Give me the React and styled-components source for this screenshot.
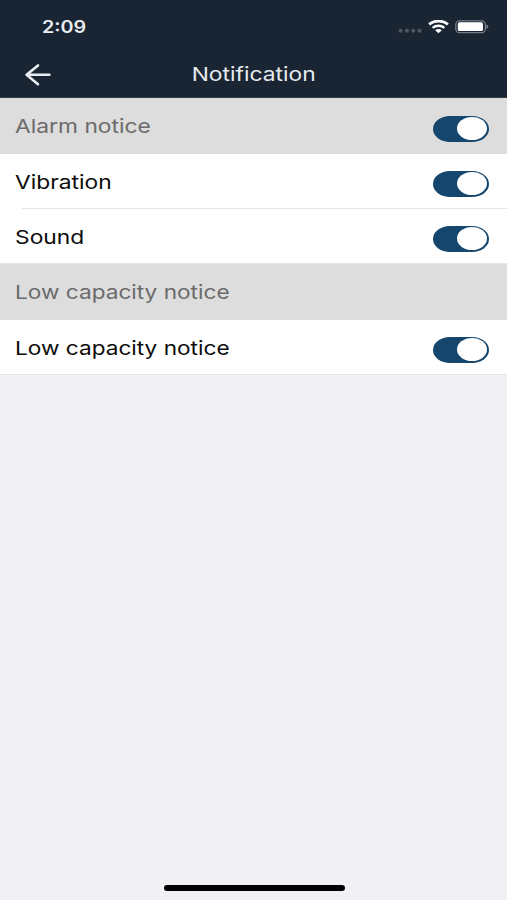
import React, { useState } from "react";
import styled, { createGlobalStyle } from "styled-components";

const GlobalStyle = createGlobalStyle`
  * {
    box-sizing: border-box;
  }
  body {
    margin: 0;
    background: #f0f0f5;
    font-family: Inter, "Liberation Sans", sans-serif;
  }
`;

const Screen = styled.div`
  display: flex;
  flex-direction: column;
  height: 900px;
  background: #f0f0f5;
`;

const Header = styled.header`
  height: 98px;
  background: #1a2533;
  border-bottom: 1px solid #343c4a;
`;

const StatusBar = styled.div`
  display: flex;
  align-items: center;
  justify-content: space-between;
  height: 53px;
  padding: 0 18.5px 0 42px;
`;

// wide lettering, stretched from one edge so the text stays on its margin
const Wide = styled.span`
  display: inline-block;
  white-space: nowrap;
  transform: scaleX(${(props) => props.$scale || 1.19});
  transform-origin: ${(props) => props.$origin || "left"} center;
`;

const Time = styled.div`
  padding-top: 2px;
  font-size: 17px;
  line-height: 51px;
  font-weight: 600;
  color: #e9edf1;
`;

const StatusIcons = styled.div`
  display: flex;
  align-items: center;
`;

const NavBar = styled.div`
  display: grid;
  grid-template-columns: 60px 1fr 60px;
  align-items: center;
  height: 44px;
`;

const BackButton = styled.button`
  display: flex;
  padding: 0 0 1px 24px;
  border: 0;
  background: none;
  cursor: pointer;
`;

const Title = styled.h1`
  margin: 0;
  text-align: center;
  font-size: 19px;
  line-height: 44px;
  font-weight: 400;
  color: #e6eaee;
`;

const Row = styled.div`
  display: flex;
  align-items: center;
  justify-content: space-between;
  height: ${(props) => props.$height}px;
  padding: 0 18.5px 0 15px;
  background: ${(props) => (props.$heading ? "#dddddd" : "#ffffff")};
  color: ${(props) => (props.$heading ? "#6b6b6b" : "#0c0c0c")};
`;

const Label = styled.div`
  padding-top: ${(props) => (props.$heading ? 2 : 3)}px;
  font-size: 19px;
  line-height: 24px;
`;

const Divider = styled.div`
  height: 1px;
  margin-left: ${(props) => (props.$inset ? 22 : 0)}px;
  background: #e6e6e8;
`;

const List = styled.main`
  flex: 1;
`;

const Group = styled.section`
  background: #ffffff;
`;

const Track = styled.button`
  display: flex;
  align-items: center;
  justify-content: ${(props) => (props.$on ? "flex-end" : "flex-start")};
  width: 55.5px;
  height: 26px;
  margin-top: 5px;
  padding: 0 2px;
  border: 0;
  border-radius: 17px / 13px;
  background: ${(props) => (props.$on ? "#15466d" : "#c8c8cc")};
  cursor: pointer;
`;

const Knob = styled.span`
  width: 30px;
  height: 23px;
  border-radius: 50%;
  background: #ffffff;
`;

const Footer = styled.footer`
  display: flex;
  justify-content: center;
  height: 15px;
  padding-left: 1px;
`;

const HomeIndicator = styled.div`
  width: 181px;
  height: 6px;
  border-radius: 3px;
  background: #000000;
`;

const Dots = () => (
  <svg width='24' height='20' viewBox='0 0 24 20' fill='#4d5661'>
    <circle cx='2.6' cy='13.8' r='2' />
    <circle cx='9' cy='13.8' r='2' />
    <circle cx='15.2' cy='13.8' r='2' />
    <circle cx='21.5' cy='13.8' r='2' />
  </svg>
);

const WifiIcon = styled.svg`
  margin: 0 6px;
`;

const Wifi = () => (
  <WifiIcon width='21' height='14' viewBox='0 0 21 14' fill='none' stroke='#f8fafc'>
    <path d='M1.1 4.4C6.2 0 14.8 0 19.9 4.4' strokeWidth='2.8' />
    <path d='M4.6 7.8C7.9 5 13.1 5 16.4 7.8' strokeWidth='2.4' />
    <path
      d='M7.2 10.2C9.2 8.7 11.8 8.7 13.8 10.2L10.5 13.3Z'
      fill='#f8fafc'
      stroke='none'
    />
  </WifiIcon>
);

const Battery = () => (
  <svg width='34' height='14' viewBox='0 0 34 14'>
    <rect
      x='.8'
      y='.8'
      width='29.6'
      height='11.8'
      rx='3.7'
      fill='none'
      stroke='#747b85'
      strokeWidth='1.3'
    />
    <rect x='2.8' y='2.3' width='25.2' height='8.8' rx='1.7' fill='#ffffff' />
    <path d='M31.4 4.5C34 5.1 34 8.3 31.4 8.9Z' fill='#747b85' />
  </svg>
);

const BackArrow = () => (
  <svg
    width='28'
    height='24'
    viewBox='0 0 28 24'
    fill='none'
    stroke='#e8edf2'
    strokeWidth='2.6'
    strokeLinecap='round'
    strokeLinejoin='round'>
    <path d='M14 2.4L2.6 11.8L14 21.2M3 11.8H25.4' />
  </svg>
);

const Toggle = ({ label }) => {
  const [on, setOn] = useState(true);

  return (
    <Track
      role='switch'
      aria-label={label}
      aria-checked={on}
      $on={on}
      onClick={() => setOn(!on)}>
      <Knob />
    </Track>
  );
};

const groups = [
  {
    title: "Alarm notice",
    scale: 1.2,
    toggle: true,
    items: [
      { label: "Vibration", scale: 1.2 },
      { label: "Sound", scale: 1.2 },
    ],
  },
  {
    title: "Low capacity notice",
    items: [{ label: "Low capacity notice" }],
  },
];

const App = () => (
  <>
    <GlobalStyle />
    <Screen>
      <Header>
        <StatusBar>
          <Time>
            <Wide $scale={1.16}>2:09</Wide>
          </Time>
          <StatusIcons>
            <Dots />
            <Wifi />
            <Battery />
          </StatusIcons>
        </StatusBar>
        <NavBar>
          <BackButton aria-label='Back'>
            <BackArrow />
          </BackButton>
          <Title>
            <Wide $scale={1.2} $origin='center'>
              Notification
            </Wide>
          </Title>
        </NavBar>
      </Header>
      <List>
        {groups.map((group) => (
          <Group key={group.title}>
            <Row $heading $height={56}>
              <Label $heading>
                <Wide $scale={group.scale}>{group.title}</Wide>
              </Label>
              {group.toggle && <Toggle label={group.title} />}
            </Row>
            {group.items.map((item, i) => (
              <React.Fragment key={item.label}>
                <Row $height={54}>
                  <Label>
                    <Wide $scale={item.scale}>{item.label}</Wide>
                  </Label>
                  <Toggle label={item.label} />
                </Row>
                <Divider $inset={i < group.items.length - 1} />
              </React.Fragment>
            ))}
          </Group>
        ))}
      </List>
      <Footer>
        <HomeIndicator />
      </Footer>
    </Screen>
  </>
);

export default App;
